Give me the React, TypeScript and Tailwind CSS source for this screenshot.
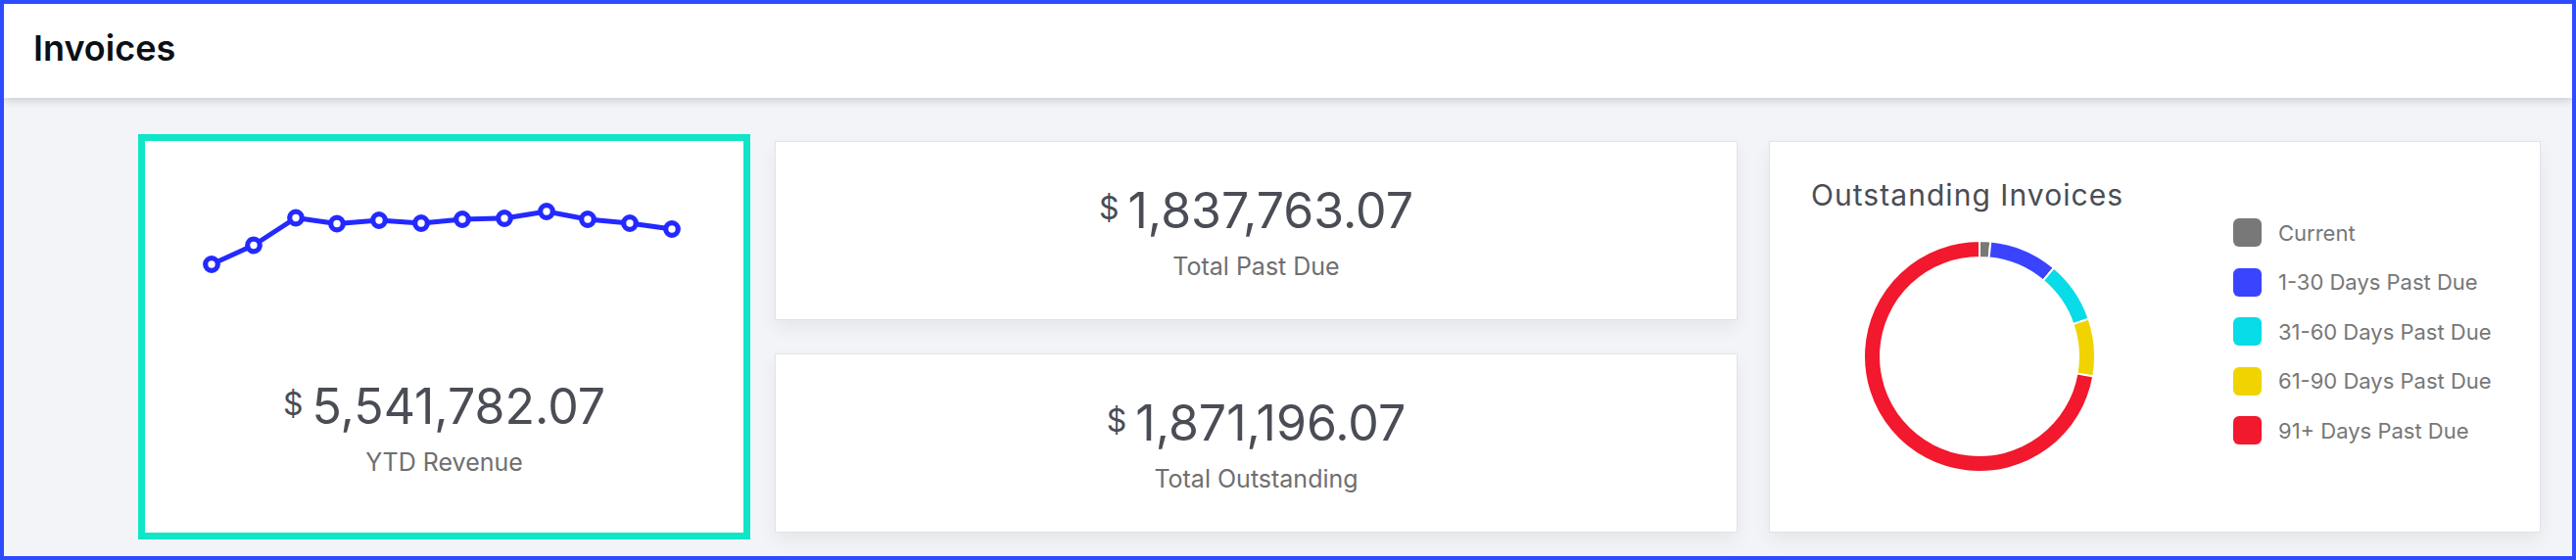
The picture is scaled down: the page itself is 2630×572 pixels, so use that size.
import React from "react";

const sparkPoints: [number, number][] = [
  [68, 90],
  [111, 70.5],
  [154, 42.5],
  [196, 48.5],
  [239, 45],
  [282, 48],
  [324, 44],
  [367, 43],
  [410, 36],
  [452, 44],
  [495, 48],
  [538, 54],
];

function Sparkline() {
  const d = sparkPoints.map((p, i) => `${i === 0 ? "M" : "L"}${p[0]} ${p[1]}`).join(" ");
  return (
    <svg width="611" height="120" viewBox="0 0 611 120" className="block">
      <path d={d} fill="none" stroke="#2329ff" strokeWidth="5" strokeLinejoin="round" />
      {sparkPoints.map((p, i) => (
        <circle key={i} cx={p[0]} cy={p[1]} r="6.3" fill="#ffffff" stroke="#2329ff" strokeWidth="5.2" />
      ))}
    </svg>
  );
}

const segments = [
  { from: 0, to: 5.5, color: "#787878" },
  { from: 5.5, to: 40, color: "#3a44ff" },
  { from: 40, to: 71, color: "#07dce8" },
  { from: 71, to: 100, color: "#f0d300" },
  { from: 100, to: 360, color: "#f2182d" },
];

function arcPath(a0: number, a1: number, ro: number, ri: number, c: number) {
  const rad = (a: number) => (a * Math.PI) / 180;
  const pt = (a: number, r: number) => [c + r * Math.sin(rad(a)), c - r * Math.cos(rad(a))];
  const large = a1 - a0 > 180 ? 1 : 0;
  const [x0, y0] = pt(a0, ro);
  const [x1, y1] = pt(a1, ro);
  const [x2, y2] = pt(a1, ri);
  const [x3, y3] = pt(a0, ri);
  return `M${x0} ${y0} A${ro} ${ro} 0 ${large} 1 ${x1} ${y1} L${x2} ${y2} A${ri} ${ri} 0 ${large} 0 ${x3} ${y3} Z`;
}

function Donut() {
  const c = 119;
  return (
    <svg width="238" height="238" viewBox="0 0 238 238" className="block">
      {segments.map((s, i) => (
        <path key={i} d={arcPath(s.from, s.to - 0.0001, 118, 101, c)} fill={s.color} stroke="#ffffff" strokeWidth="2" />
      ))}
    </svg>
  );
}

function Amount({ value }: { value: string }) {
  return (
    <div className="flex items-start justify-center text-[#4a4d55]">
      <span className="mt-[7px] mr-[9px] text-[32px] leading-none">$</span>
      <span className="text-[50px] leading-none">{value}</span>
    </div>
  );
}

function StatCard({ value, label }: { value: string; label: string }) {
  return (
    <div className="flex h-[183px] flex-col items-center justify-center border border-[#e2e3e7] bg-white pt-[4px] shadow-[0_8px_18px_rgba(0,0,0,0.06)]">
      <Amount value={value} />
      <div className="mt-5 text-[25px] leading-none text-[#6f6f6f]">{label}</div>
    </div>
  );
}

const legend = [
  { label: "Current", color: "#787878" },
  { label: "1-30 Days Past Due", color: "#3a44ff" },
  { label: "31-60 Days Past Due", color: "#07dce8" },
  { label: "61-90 Days Past Due", color: "#f0d300" },
  { label: "91+ Days Past Due", color: "#f2182d" },
];

export default function App() {
  return (
    <div className="flex h-[572px] w-[2630px] flex-col overflow-hidden border-4 border-[#2d4bff] bg-[#f3f4f8] font-[family-name:Inter,sans-serif]">
      <header className="relative z-10 h-[96px] shrink-0 bg-white pl-[30px] pt-[25px] shadow-[0_3px_8px_rgba(0,0,0,0.16)]">
        <h1 className="text-[36px] font-semibold leading-[40px] text-[#0b1015]">Invoices</h1>
      </header>
      <main className="flex gap-8 pl-[144px] pt-[44px]">
        <div className="flex h-[400px] w-[611px] flex-col bg-white pt-[36px] outline-7 outline-[#10e5c8]">
          <Sparkline />
          <div className="mt-[90px]">
            <Amount value="5,541,782.07" />
          </div>
          <div className="mt-5 text-center text-[25px] leading-none text-[#6f6f6f]">YTD Revenue</div>
        </div>
        <div className="flex w-[983px] flex-col gap-[34px]">
          <StatCard value="1,837,763.07" label="Total Past Due" />
          <StatCard value="1,871,196.07" label="Total Outstanding" />
        </div>
        <div className="flex h-[400px] w-[788px] border border-[#e2e3e7] bg-white pl-[42px] shadow-[0_8px_18px_rgba(0,0,0,0.06)]">
          <div className="w-[431px] pt-[39px]">
            <div className="text-[30px] leading-none tracking-[1.05px] text-[#4a4d55]">Outstanding Invoices</div>
            <div className="ml-[53px] mt-[31px]">
              <Donut />
            </div>
          </div>
          <div className="flex flex-col gap-[21.5px] pt-[78px]">
            {legend.map((l) => (
              <div key={l.label} className="flex h-[29px] items-center">
                <div className="h-[29px] w-[29px] rounded-[6px]" style={{ backgroundColor: l.color }} />
                <span className="ml-[17px] text-[22px] leading-none text-[#777777]">{l.label}</span>
              </div>
            ))}
          </div>
        </div>
      </main>
    </div>
  );
}
